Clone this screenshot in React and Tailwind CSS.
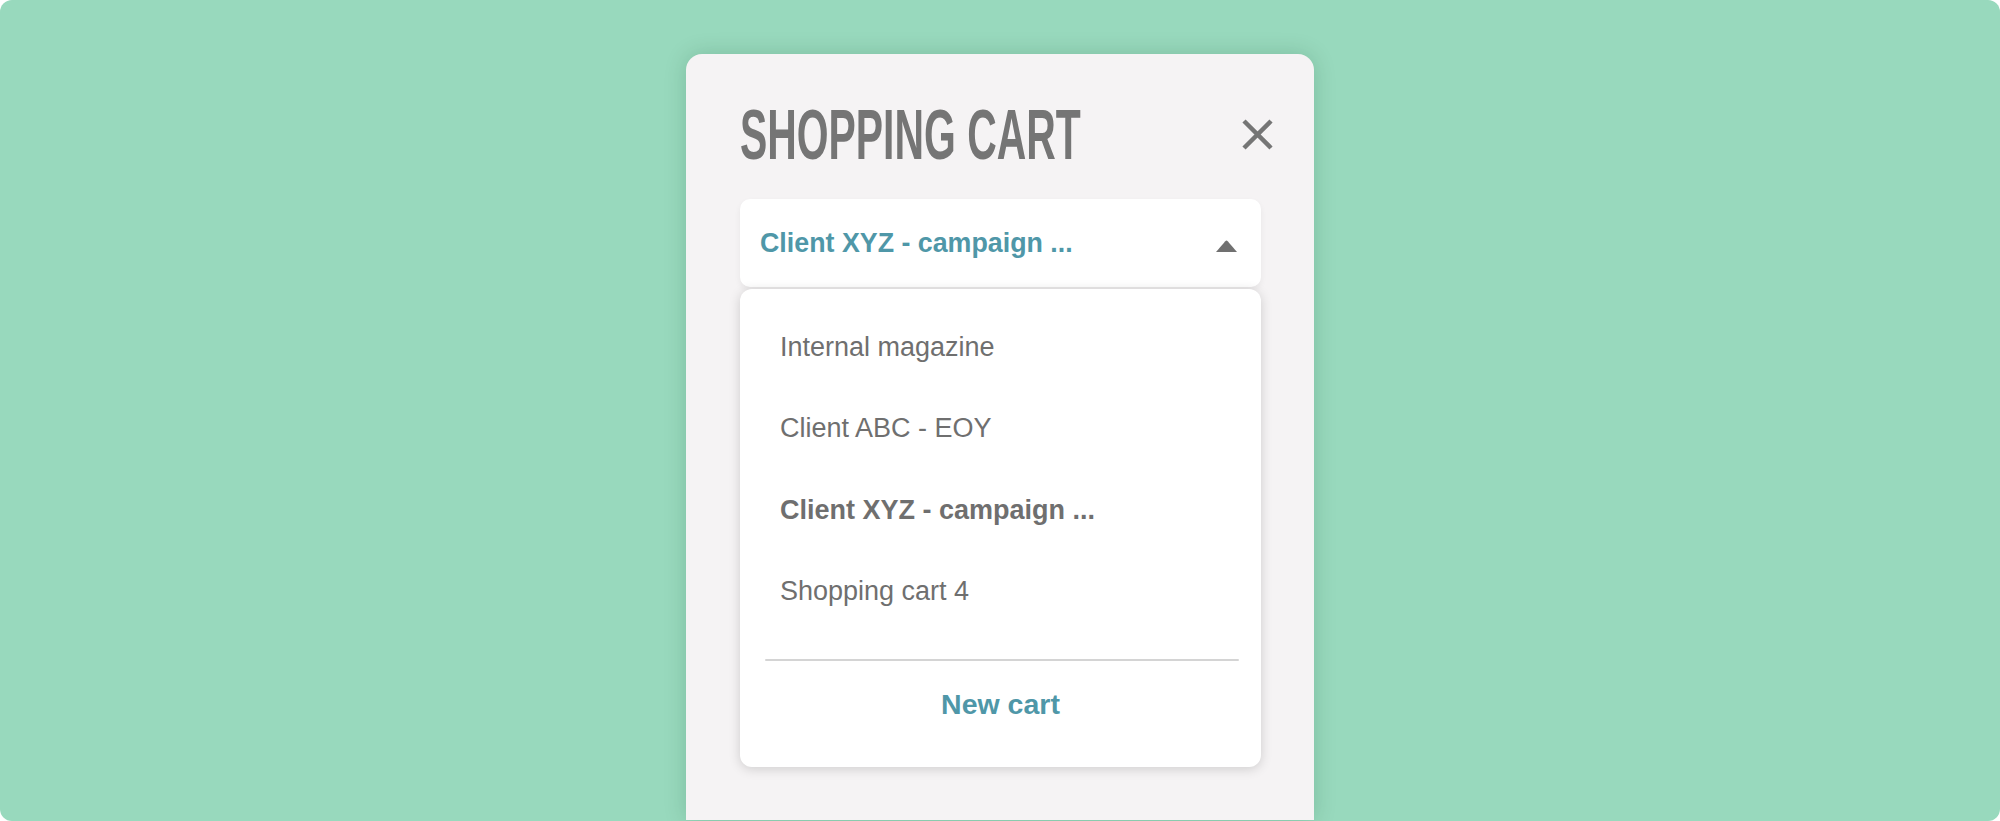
import React from "react";

const carts = [
  { label: "Internal magazine", active: false },
  { label: "Client ABC - EOY", active: false },
  { label: "Client XYZ - campaign ...", active: true },
  { label: "Shopping cart 4", active: false },
];

function CloseIcon() {
  return (
    <svg width="31" height="31" viewBox="0 0 31 31" fill="none">
      <path d="M2 2 L29 29 M29 2 L2 29" stroke="#757575" strokeWidth="4.5" strokeLinecap="butt" />
    </svg>
  );
}

function CaretUp() {
  return (
    <svg width="21" height="12" viewBox="0 0 21 12">
      <path d="M9.3 1.2 Q10.5 0 11.7 1.2 L21 12 L0 12 Z" fill="#707070" />
    </svg>
  );
}

export default function App() {
  return (
    <div className="min-h-screen bg-white">
      <div className="flex h-[821px] w-full justify-center overflow-hidden rounded-[12px] bg-[#98d9bd] pt-[54px]">
        <div className="h-[766px] w-[628px] rounded-t-[16px] bg-[#f5f3f4] pl-[54px] pr-[53px] pt-[46px] shadow-[0_0_22px_rgba(0,60,30,0.18)] [font-family:'Liberation_Sans',Arial,sans-serif]">
          {/* header */}
          <div className="flex items-start">
            <div className="h-[70px] w-[340px]">
              <h1 className="inline-block origin-left whitespace-nowrap text-[70px] font-bold leading-none text-[#757575] [transform:scaleX(0.584)]">
                SHOPPING CART
              </h1>
            </div>
            <button className="-mr-[12px] ml-auto mt-[19px]">
              <CloseIcon />
            </button>
          </div>

          {/* cart selector */}
          <div className="mt-[29px] flex h-[88px] items-center justify-between rounded-[10px] bg-white pl-[20px] pr-[24px] shadow-[0_3px_6px_rgba(0,0,0,0.06)]">
            <span className="text-[26.8px] font-bold text-[#4f97a8]">Client XYZ - campaign ...</span>
            <span className="mt-[6px] flex">
              <CaretUp />
            </span>
          </div>

          {/* dropdown list */}
          <div className="mt-[2px] rounded-[12px] bg-white pb-[20px] pt-[17px] shadow-[0_2px_12px_rgba(0,0,0,0.16)]">
            {carts.map((c) => (
              <div key={c.label} className="flex h-[81.5px] items-center pl-[40px]">
                <span className={"text-[27px] text-[#6f6f6f] " + (c.active ? "font-bold" : "font-normal")}>
                  {c.label}
                </span>
              </div>
            ))}
            <div className="ml-[25px] mr-[22px] mt-[27px] h-[2px] rounded-full bg-[#d4d4d4]" />
            <div className="flex h-[86px] items-center justify-center">
              <span className="text-[28.5px] font-bold text-[#4f97a8]">New cart</span>
            </div>
          </div>
        </div>
      </div>
    </div>
  );
}
